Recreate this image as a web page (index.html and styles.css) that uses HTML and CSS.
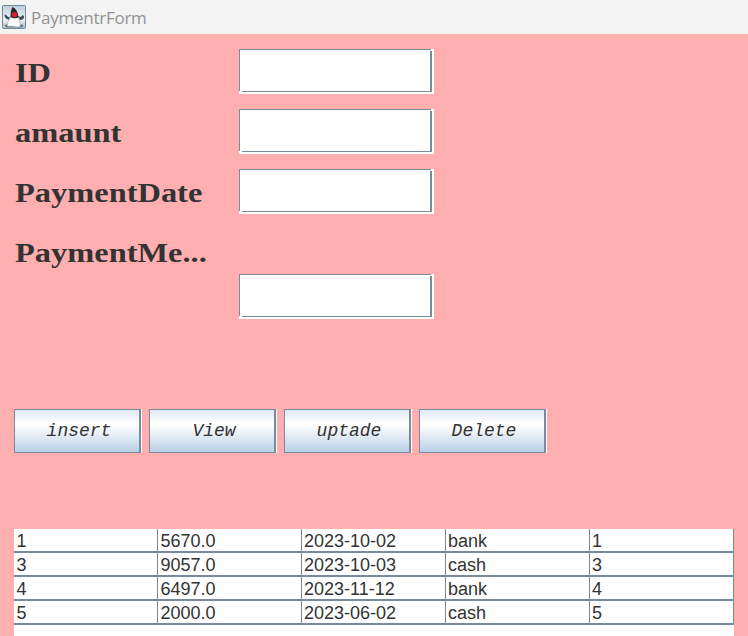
FILE: index.html
```html
<!DOCTYPE html>
<html lang="en">
<head>
<meta charset="utf-8">
<title>PaymentrForm</title>
<link rel="stylesheet" href="styles.css">
</head>
<body>
<header class="titlebar">
  <svg class="app-icon" width="24" height="24" viewBox="0 0 24 24" aria-hidden="true">
    <defs><linearGradient id="sky" x1="0" y1="0" x2="0" y2="1"><stop offset="0" stop-color="#bccddb"/><stop offset=".6" stop-color="#f0f4f7"/><stop offset="1" stop-color="#aab6bf"/></linearGradient></defs>
    <rect x=".5" y=".5" width="23" height="23" rx="1" fill="url(#sky)" stroke="#6f8799"/>
    <path d="M2.500 20.500c5-3 14-3 19 0l-2 1.800H4.500z" fill="#59646c"/>
    <path d="M9 11c-1 2-4 1-5-1.500l-1.500.5c0 2 1 3.500 3.500 4.500l2 1zM16 11l3 1 1.500-2 1.500 1c0 3-1 4-4 4z" fill="#404850"/>
    <path d="M8 12c-1 3-2.500 6-3 9 2 .8 4 .2 6 .4 3 .4 5 1 7.500-.2-.5-4-1-7-2.500-9.500z" fill="#fafafa" stroke="#9aa2a8" stroke-width=".5"/>
    <path d="M10.500 2c3.500 1.500 5.500 5 6 10.500-2 1.200-6 1-8-.5C8.300 8 9.300 4 10.500 2z" fill="#25272b"/>
    <ellipse cx="12.400" cy="9.600" rx="2.900" ry="2.600" fill="#d81f34"/>
  </svg>
  <span class="title">PaymentrForm</span>
</header>
<main class="form">
  <div class="row"><label class="label" for="id"><span>ID</span></label><input class="field" id="id"></div>
  <div class="row"><label class="label" for="amount"><span>amaunt</span></label><input class="field" id="amount"></div>
  <div class="row"><label class="label" for="date"><span>PaymentDate</span></label><input class="field" id="date"></div>
  <div class="row row-method"><label class="label" for="method"><span>PaymentMe...</span></label><input class="field" id="method"></div>
  <div class="actions">
    <button class="button">insert</button>
    <button class="button">View</button>
    <button class="button">uptade</button>
    <button class="button">Delete</button>
  </div>
  <div class="table-pane">
    <table class="payments">
      <tbody>
        <tr><td>1</td><td>5670.0</td><td>2023-10-02</td><td>bank</td><td>1</td></tr>
        <tr><td>3</td><td>9057.0</td><td>2023-10-03</td><td>cash</td><td>3</td></tr>
        <tr><td>4</td><td>6497.0</td><td>2023-11-12</td><td>bank</td><td>4</td></tr>
        <tr><td>5</td><td>2000.0</td><td>2023-06-02</td><td>cash</td><td>5</td></tr>
      </tbody>
    </table>
  </div>
</main>
</body>
</html>
```
FILE: styles.css
```css
* { box-sizing: border-box; }
body {
  margin: 0;
  height: 636px;
  overflow: hidden;
  display: flex;
  flex-direction: column;
  background: #ffafaf;
  color: #333;
  font-family: "Liberation Sans", Arial, sans-serif;
}
.titlebar {
  flex: none;
  height: 34px;
  display: flex;
  align-items: center;
  gap: 5px;
  padding-left: 2px;
  background: #f3f3f3;
}
.title {
  padding-top: 2px;
  font: 17px/24px "Open Sans", "Segoe UI", sans-serif;
  letter-spacing: -0.25px;
  color: #929292;
}
.form {
  flex: 1;
  display: flex;
  flex-direction: column;
  padding: 15px 14px 0;
}
.row {
  flex: none;
  height: 45px;
  margin-bottom: 15px;
  display: flex;
}
.label {
  width: 225px;
  padding-left: 1px;
  font: bold 28px/48px "Liberation Serif", Georgia, serif;
}
.label span {
  display: inline-block;
  transform: scaleX(1.158);
  transform-origin: left;
}
.field {
  width: 195px;
  height: 45px;
  border: 0;
  padding: 0 5px;
  outline: 0;
  background:
    linear-gradient(#7a8a99, #7a8a99) 0 0 / 192px 1px no-repeat,
    linear-gradient(#7a8a99, #7a8a99) 0 0 / 1px 42px no-repeat,
    linear-gradient(#7a8a99, #7a8a99) 191px 2px / 2px 41px no-repeat,
    linear-gradient(#7a8a99, #7a8a99) 3px 42px / 190px 1px no-repeat,
    #fff;
  font-size: 18px;
}
.row-method {
  height: 90px;
  margin-bottom: 90px;
}
.row-method .field { margin-top: 45px; }
.actions {
  flex: none;
  display: flex;
  gap: 8px;
  height: 44px;
  margin-bottom: 76px;
}
.button {
  width: 127px;
  padding: 0 0 0 4px;
  border: 1px solid #7a8a99;
  border-right-width: 2px;
  border-radius: 0;
  background: linear-gradient(#dde8f3, #fff 30%, #fff 36%, #b8cfe5);
  box-shadow: 1px 0 #fff;
  color: #333;
  font: italic 18px/22px "Liberation Mono", "Courier New", monospace;
}
.table-pane {
  flex: 1;
  background: #fff;
}
.payments {
  width: 720px;
  table-layout: fixed;
  border-collapse: separate;
  border-spacing: 0;
}
.payments td {
  height: 24px;
  padding: 1px 2px 0;
  border-right: 1px solid #7a8a99;
  border-bottom: 2px solid #7a8a99;
  font-size: 18px;
  line-height: 21px;
}
.payments td { padding-top: 2px; line-height: 20px; }
.payments td:nth-child(-n+2) { padding-left: 2.500px; }
```
